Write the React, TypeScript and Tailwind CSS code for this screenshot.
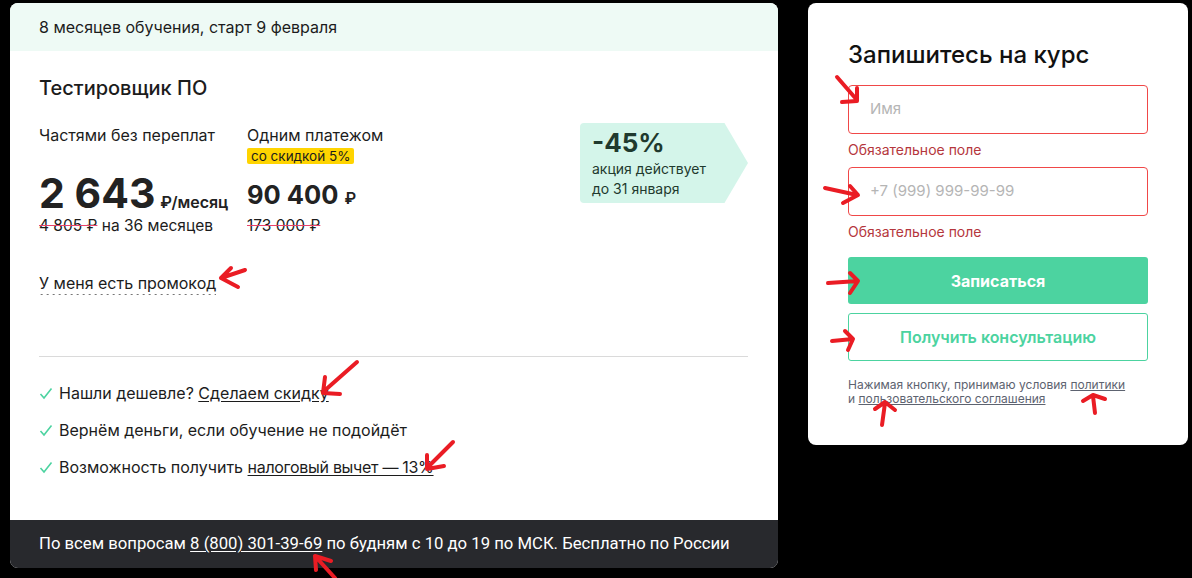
import React from 'react';

const Check = () => (
  <svg width="14" height="13" viewBox="0 0 14 13" className="mr-[6px] shrink-0">
    <polyline points="1.5,7 5,11 12.5,1.5" fill="none" stroke="#4cd3a0" strokeWidth="1.6" />
  </svg>
);

const arrows = [
  'M245 270 L221 278 M231 268 L221 278 L238 287',
  'M357 362 L323 392 M325 377 L323 393 L340 394',
  'M453 442 L427 468 M427 455 L427 469 L444 466',
  'M335 578 L315 556 M316 570 L315 556 L331 561',
  'M837 77 L857 100 M842 102 L857 101 L857 88',
  'M825 188 L857 195 M850 186 L858 195 L843 203',
  'M828 283 L858 281 M850 273 L858 281 L850 293',
  'M832 341 L853 339 M845 331 L853 339 L848 350',
  'M882 425 L885 403 M875 409 L885 402 L895 410',
  'M1095 413 L1093 396 M1083 401 L1093 395 L1105 399',
];

function CourseCard() {
  return (
    <div className="flex h-[565px] w-[768px] shrink-0 flex-col overflow-hidden rounded-[8px] bg-white text-[#1c1c1c]">
      <div className="flex h-[48px] items-center bg-[#eefaf5] px-[29px] text-[16px]">
        8 месяцев обучения, старт 9 февраля
      </div>

      <div className="flex flex-1 flex-col pl-[29px] pr-[30px] pt-[23px]">
        <h1 className="text-[20px] font-medium leading-[28px]">Тестировщик ПО</h1>

        <div className="mt-[23px] flex items-start justify-between">
          <div className="flex">
            <div className="w-[208px]">
              <div className="text-[16px] leading-[20px]">Частями без переплат</div>
              <div className="mt-[26px] flex h-[44px] items-baseline">
                <span className="text-[41px] font-bold leading-[44px] text-[#222]">2 643</span>
                <span className="ml-[5px] text-[16px] font-semibold leading-none text-[#222]">₽/месяц</span>
              </div>
              <div className="mt-[1px] text-[15.5px] leading-[20px]">
                <span className="line-through decoration-[#e8436c]">4 805 ₽</span> на 36 месяцев
              </div>
            </div>
            <div>
              <div className="text-[16px] leading-[20px]">Одним платежом</div>
              <div className="mt-[3px] w-fit rounded-[2px] bg-[#ffd400] px-[4px] text-[13.5px] leading-[16px]">
                со скидкой 5%
              </div>
              <div className="mt-[15px] h-[32px] text-[25.5px] font-bold leading-[32px] text-[#222]">
                90 400 <span className="text-[16px] font-semibold leading-none">₽</span>
              </div>
              <div className="mt-[5px] text-[15.5px] leading-[20px]">
                <span className="line-through decoration-[#e8436c]">173 000 ₽</span>
              </div>
            </div>
          </div>

          <div className="-mt-[2px] h-[80px] w-[168px] rounded-l-[4px] bg-[#d4f5ea] pl-[12px] pt-[4px] text-[#1f3a2e] [clip-path:polygon(0_0,86%_0,100%_50%,86%_100%,0_100%)]">
            <div className="text-[26px] font-bold leading-[32px]">-45%</div>
            <div className="text-[14px] leading-[20px]">акция действует</div>
            <div className="text-[14px] leading-[20px]">до 31 января</div>
          </div>
        </div>

        <div className="mt-[37px] w-fit bg-[linear-gradient(to_right,#777_40%,transparent_0)] bg-[length:6px_1px] bg-bottom bg-repeat-x pb-[2px] text-[16px] leading-[20px]">
          У меня есть промокод
        </div>

        <div className="mt-[61px] h-px bg-[#dadada]" />

        <ul className="mt-[26px] flex flex-col gap-[17px] text-[16px] leading-[20px]">
          <li className="flex items-center">
            <Check />
            <span>
              Нашли дешевле? <span className="underline underline-offset-2">Сделаем скидку</span>
            </span>
          </li>
          <li className="flex items-center">
            <Check />
            <span>Вернём деньги, если обучение не подойдёт</span>
          </li>
          <li className="flex items-center">
            <Check />
            <span>
              Возможность получить{' '}
              <span className="underline underline-offset-2 tracking-[-0.3px]">налоговый вычет — 13%</span>
            </span>
          </li>
        </ul>
      </div>

      <div className="flex h-[48px] items-center bg-[#28292d] px-[29px] font-['Roboto',sans-serif] text-[16.7px] text-white">
        По всем вопросам&nbsp;<span className="underline underline-offset-2">8 (800) 301-39-69</span>&nbsp;по будням с 10 до 19 по МСК. Бесплатно по России
      </div>
    </div>
  );
}

function SignupCard() {
  return (
    <div className="h-[442px] w-[380px] shrink-0 rounded-[8px] bg-white px-[40px] pt-[38px]">
      <h2 className="text-[24px] font-medium leading-[28px] text-[#111]">Запишитесь на курс</h2>

      <div className="mt-[16px] flex h-[49px] items-center rounded-[4px] border border-[#f04848] pl-[21px] text-[15px] text-[#b5b5b5]">
        Имя
      </div>
      <div className="mt-[6px] text-[14px] leading-[20px] text-[#b5373d]">Обязательное поле</div>

      <div className="mt-[7px] flex h-[49px] items-center rounded-[4px] border border-[#f04848] pl-[21px] text-[15px] text-[#b5b5b5]">
        +7 (999) 999-99-99
      </div>
      <div className="mt-[6px] text-[14px] leading-[20px] text-[#b5373d]">Обязательное поле</div>

      <button className="mt-[15px] flex h-[47px] w-full items-center justify-center rounded-[3px] bg-[#4cd3a0] text-[16px] font-bold text-white">
        Записаться
      </button>
      <button className="mt-[9px] flex h-[48px] w-full items-center justify-center rounded-[3px] border border-[#4cd3a0] text-[16px] font-semibold text-[#4cd3a0]">
        Получить консультацию
      </button>

      <p className="mt-[17px] text-[12px] leading-[14px] text-[#5d6370]">
        Нажимая кнопку, принимаю условия <span className="underline">политики</span>
        <br />и <span className="underline">пользовательского соглашения</span>
      </p>
    </div>
  );
}

export default function App() {
  return (
    <div className="relative flex min-h-[578px] w-full items-start gap-[30px] bg-black pl-[10px] pt-[3px] font-['Inter',sans-serif]">
      <CourseCard />
      <SignupCard />

      <svg className="pointer-events-none absolute left-0 top-0" width="1192" height="578" viewBox="0 0 1192 578">
        {arrows.map((d, i) => (
          <path key={i} d={d} fill="none" stroke="#ea1c24" strokeWidth="4" strokeLinecap="round" strokeLinejoin="round" />
        ))}
      </svg>
    </div>
  );
}
